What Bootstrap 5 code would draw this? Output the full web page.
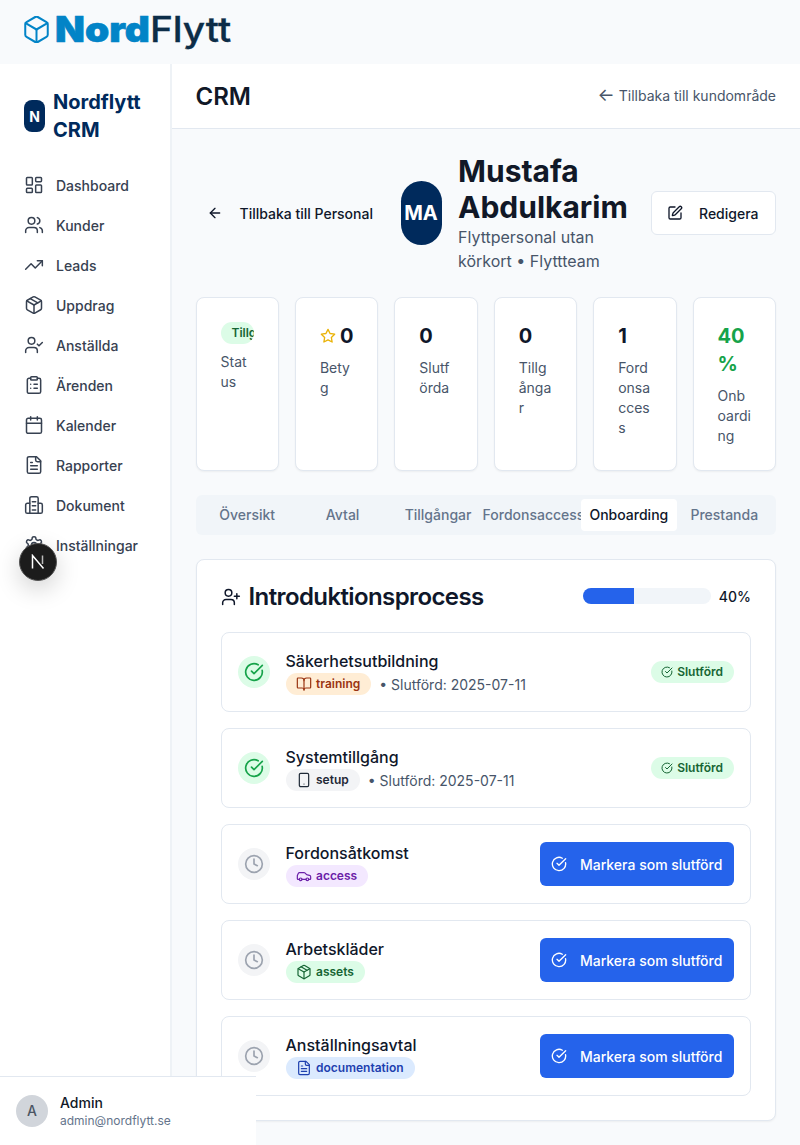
<!DOCTYPE html>
<html lang="sv">
<head>
    <meta charset="UTF-8">
    <title>Nordflytt CRM</title>
    <link href="https://cdn.jsdelivr.net/npm/bootstrap@5.3.0/dist/css/bootstrap.min.css" rel="stylesheet">
    <style>
        body {
            font-family: Inter, "Liberation Sans", sans-serif;
            background: #f8fafc;
            color: #0f172a;
            height: 100vh;
            overflow: hidden;
            position: relative;
        }

        .ico {
            width: 16px;
            height: 16px;
            fill: none;
            stroke: currentColor;
            stroke-width: 2;
            stroke-linecap: round;
            stroke-linejoin: round;
            flex-shrink: 0;
        }

        .top-logo { height: 64px; padding-left: 24px; background: #f8fafc; }
        .logo-cube { width: 25px; height: 27px; color: #0284c7; stroke-width: 1.6; margin-top: -5px; }
        .logo-text { font-size: 35px; line-height: 1; margin: 0 0 5px 6px; transform: scaleX(1.11); transform-origin: left center; }
        .logo-nord { color: #0284c7; font-weight: 900; -webkit-text-stroke: .6px #0284c7; }
        .logo-flytt { color: #0c2d48; font-weight: 500; -webkit-text-stroke: .3px #0c2d48; }

        .app-shell { height: calc(100vh - 64px); }

        .side { width: 171.5px; background: #fff; border-right: 2px solid #eef2f6; padding: 24px 0 0 24px; }
        .side-brand { height: 56px; margin-bottom: 21px; gap: 8px; }
        .side-logo { width: 21px; height: 32px; border-radius: 8px; background: #002a5c; color: #fff; font-size: 14px; font-weight: 700; }
        .side-name { font-size: 20px; line-height: 28px; font-weight: 700; color: #002a5c; width: 100px; }
        .side-link { height: 40px; gap: 12px; font-size: 14px; font-weight: 500; color: #374151; text-decoration: none; }
        .side-link .ico { width: 20px; height: 20px; stroke-width: 1.8; }

        .dev-badge {
            position: absolute; left: 19px; top: 543px; width: 38px; height: 38px;
            background: #1c1c1c; border: 1px solid #555; color: #fff;
            box-shadow: 0 8px 24px rgba(0, 0, 0, .18);
        }
        .dev-badge svg { width: 16px; height: 16px; stroke: #fff; stroke-width: 1.5; fill: none; }

        .main-head { height: 65px; background: #fff; border-bottom: 1px solid #e2e8f0; padding: 0 24px; }
        .main-title { font-size: 24px; line-height: 32px; font-weight: 600; color: #111827; padding-top: 1px; }
        .back-shop { font-size: 14px; line-height: 20px; color: #475569; text-decoration: none; padding-bottom: 1px; }
        .back-arrow { font-size: 18px; line-height: 1; }

        .main-body { padding: 24px; }

        .profile-row { height: 120px; }
        .back-link { padding-left: 11px; gap: 17px; font-size: 14px; font-weight: 500; color: #0f172a; text-decoration: none; width: 177px; white-space: nowrap; }
        .profile-avatar { width: 41px; height: 64px; margin-left: 28px; background: #002a5c; color: #fff; font-size: 20px; font-weight: 700; border-radius: 21px; }
        .profile-text { width: 177px; margin-left: 16.5px; }
        .profile-name { font-size: 30px; line-height: 36px; font-weight: 700; color: #111827; margin: 0; }
        .profile-role { font-size: 16px; line-height: 24px; color: #475569; }
        .edit-btn { width: 125px; height: 44px; margin-left: auto; gap: 16px; padding: 0 15px; background: #fff; border: 1px solid #e2e8f0; border-radius: 6px; font-size: 14px; font-weight: 500; color: #0f172a; }

        .stat-grid { display: grid; grid-template-columns: repeat(6, minmax(0, 1fr)); gap: 16px; margin-top: 24px; }
        .stat-box { height: 174px; padding: 24px; border: 1px solid #e2e8f0; border-radius: 8px; background: #fff; box-shadow: 0 1px 2px rgba(0, 0, 0, .05); }
        .stat-num { font-size: 20px; line-height: 28px; font-weight: 700; color: #0f172a; overflow-wrap: anywhere; gap: 4px; }
        .stat-green { color: #16a34a; }
        .stat-label { margin-top: 8px; font-size: 14px; line-height: 20px; color: #475569; overflow-wrap: anywhere; }
        .status-pill { display: block; height: 22px; max-width: 100%; overflow: hidden; padding: 3px 11px; font-size: 12px; line-height: 16px; font-weight: 600; white-space: nowrap; background: #dcfce7; color: #166534; border-radius: 11px; }
        .star-ico { color: #eab308; }

        .tab-strip { display: grid; grid-template-columns: repeat(6, minmax(0, 1fr)); height: 40px; margin-top: 24px; padding: 4px; background: #f1f5f9; border-radius: 6px; }
        .tab-item { display: flex; justify-content: center; align-items: center; min-width: 0; white-space: nowrap; font-size: 14px; font-weight: 500; color: #64748b; text-decoration: none; border-radius: 4px; padding-bottom: 1px; }
        .tab-on { position: relative; background: #fff; color: #0f172a; }

        .panel-box { margin-top: 24px; padding: 20px 24px 24px; border: 1px solid #e2e8f0; border-radius: 8px; background: #fff; box-shadow: 0 1px 2px rgba(0, 0, 0, .05); }
        .panel-head { height: 32px; margin-bottom: 20px; }
        .panel-title { font-size: 24px; line-height: 32px; font-weight: 600; margin: 0; gap: 8px; letter-spacing: -.6px; padding-top: 1px; }
        .panel-title .ico { width: 20px; height: 20px; stroke-width: 1.8; }
        .bar-track { width: 128px; height: 16px; background: #f1f5f9; border-radius: 8px; }
        .bar-fill { background: #2563eb; }
        .bar-text { font-size: 14px; font-weight: 500; }

        .step-row { height: 80px; padding: 0 16px; border: 1px solid #e2e8f0; border-radius: 8px; }
        .step-list { gap: 16px; }
        .step-dot { width: 32px; height: 32px; margin-right: 16px; }
        .step-dot .ico { width: 20px; height: 20px; }
        .dot-done { background: #dcfce7; color: #16a34a; }
        .dot-wait { background: #f3f4f6; color: #9ca3af; }
        .step-title { font-size: 16px; line-height: 24px; font-weight: 500; color: #0f172a; }
        .step-meta { gap: 8px; height: 22px; font-size: 14px; color: #475569; }

        .tag-pill { height: 22px; padding: 0 11px 0 10.5px; gap: 4px; font-size: 12px; font-weight: 600; border-radius: 11px; }
        .tag-pill .ico { width: 16px; height: 16px; stroke-width: 1.8; }
        .tag-training { background: #ffedd5; color: #9a3412; }
        .tag-setup { background: #f3f4f6; color: #1f2937; }
        .tag-access { background: #f3e8ff; color: #6b21a8; }
        .tag-assets { background: #dcfce7; color: #166534; }
        .tag-doc { background: #dbeafe; color: #1e40af; }
        .tag-done { background: #dcfce7; color: #166534; }
        .tag-done .ico { width: 12px; height: 12px; stroke-width: 2; }

        .finish-btn { width: 194px; height: 44px; padding: 0 0 0 11px; gap: 13px; background: #2563eb; border: 0; border-radius: 6px; color: #fff; font-size: 14px; font-weight: 500; }

        .user-foot { position: absolute; left: 0; bottom: 0; width: 256px; height: 69px; padding: 0 16px 1px; gap: 12px; background: #fff; border-top: 1px solid #e2e8f0; }
        .user-avatar { width: 32px; height: 32px; background: #d1d5db; color: #4b5563; font-size: 14px; font-weight: 500; }
        .user-name { font-size: 14px; line-height: 20px; font-weight: 500; color: #111827; }
        .user-mail { font-size: 12px; line-height: 16px; color: #64748b; }
    </style>
</head>
<body>

<svg width="0" height="0" class="position-absolute">
    <defs>
        <symbol id="i-dash" viewBox="0 0 24 24"><rect x="3" y="3" width="7" height="9" rx="1"/><rect x="14" y="3" width="7" height="5" rx="1"/><rect x="14" y="12" width="7" height="9" rx="1"/><rect x="3" y="16" width="7" height="5" rx="1"/></symbol>
        <symbol id="i-users" viewBox="0 0 24 24"><path d="M16 21v-2a4 4 0 0 0-4-4H6a4 4 0 0 0-4 4v2"/><circle cx="9" cy="7" r="4"/><path d="M22 21v-2a4 4 0 0 0-3-3.87"/><path d="M16 3.13a4 4 0 0 1 0 7.75"/></symbol>
        <symbol id="i-trend" viewBox="0 0 24 24"><polyline points="22 7 13.5 15.5 8.5 10.5 2 17"/><polyline points="16 7 22 7 22 13"/></symbol>
        <symbol id="i-package" viewBox="0 0 24 24"><path d="M11 21.73a2 2 0 0 0 2 0l7-4A2 2 0 0 0 21 16V8a2 2 0 0 0-1-1.73l-7-4a2 2 0 0 0-2 0l-7 4A2 2 0 0 0 3 8v8a2 2 0 0 0 1 1.73z"/><path d="M12 22V12"/><polyline points="3.29 7 12 12 20.71 7"/><path d="m7.5 4.27 9 5.15"/></symbol>
        <symbol id="i-usercheck" viewBox="0 0 24 24"><path d="M16 21v-2a4 4 0 0 0-4-4H6a4 4 0 0 0-4 4v2"/><circle cx="9" cy="7" r="4"/><polyline points="16 11 18 13 22 9"/></symbol>
        <symbol id="i-clip" viewBox="0 0 24 24"><rect x="8" y="2" width="8" height="4" rx="1"/><path d="M16 4h2a2 2 0 0 1 2 2v14a2 2 0 0 1-2 2H6a2 2 0 0 1-2-2V6a2 2 0 0 1 2-2h2"/><path d="M12 11h4"/><path d="M12 16h4"/><path d="M8 11h.01"/><path d="M8 16h.01"/></symbol>
        <symbol id="i-cal" viewBox="0 0 24 24"><path d="M8 2v4"/><path d="M16 2v4"/><rect x="3" y="4" width="18" height="18" rx="2"/><path d="M3 10h18"/></symbol>
        <symbol id="i-file" viewBox="0 0 24 24"><path d="M15 2H6a2 2 0 0 0-2 2v16a2 2 0 0 0 2 2h12a2 2 0 0 0 2-2V7Z"/><path d="M14 2v4a2 2 0 0 0 2 2h4"/><path d="M10 9H8"/><path d="M16 13H8"/><path d="M16 17H8"/></symbol>
        <symbol id="i-docs" viewBox="0 0 24 24"><path d="M7 22V4a2 2 0 0 1 2-2h6a2 2 0 0 1 2 2v18"/><path d="M7 10H4a2 2 0 0 0-2 2v8a2 2 0 0 0 2 2h16a2 2 0 0 0 2-2v-8a2 2 0 0 0-2-2h-3"/><path d="M10 8h4"/><path d="M10 13h4"/><path d="M10 18h4"/></symbol>
        <symbol id="i-gear" viewBox="0 0 24 24"><path d="M12.22 2h-.44a2 2 0 0 0-2 2v.18a2 2 0 0 1-1 1.73l-.43.25a2 2 0 0 1-2 0l-.15-.08a2 2 0 0 0-2.73.73l-.22.38a2 2 0 0 0 .73 2.73l.15.1a2 2 0 0 1 1 1.72v.51a2 2 0 0 1-1 1.74l-.15.09a2 2 0 0 0-.73 2.73l.22.38a2 2 0 0 0 2.73.73l.15-.08a2 2 0 0 1 2 0l.43.25a2 2 0 0 1 1 1.73V20a2 2 0 0 0 2 2h.44a2 2 0 0 0 2-2v-.18a2 2 0 0 1 1-1.73l.43-.25a2 2 0 0 1 2 0l.15.08a2 2 0 0 0 2.73-.73l.22-.39a2 2 0 0 0-.73-2.73l-.15-.08a2 2 0 0 1-1-1.74v-.5a2 2 0 0 1 1-1.74l.15-.09a2 2 0 0 0 .73-2.73l-.22-.38a2 2 0 0 0-2.73-.73l-.15.08a2 2 0 0 1-2 0l-.43-.25a2 2 0 0 1-1-1.73V4a2 2 0 0 0-2-2z"/><circle cx="12" cy="12" r="3"/></symbol>
        <symbol id="i-check" viewBox="0 0 24 24"><path d="M21.801 10A10 10 0 1 1 17 3.335"/><path d="m9 11 3 3L22 4"/></symbol>
        <symbol id="i-clock" viewBox="0 0 24 24"><circle cx="12" cy="12" r="10"/><polyline points="12 6 12 12 16 14"/></symbol>
        <symbol id="i-book" viewBox="0 0 24 24"><path d="M12 7v14"/><path d="M3 18a1 1 0 0 1-1-1V4a1 1 0 0 1 1-1h5a4 4 0 0 1 4 4 4 4 0 0 1 4-4h5a1 1 0 0 1 1 1v13a1 1 0 0 1-1 1h-6a3 3 0 0 0-3 3 3 3 0 0 0-3-3z"/></symbol>
        <symbol id="i-phone" viewBox="0 0 24 24"><rect x="5" y="2" width="14" height="20" rx="2"/><path d="M12 18h.01"/></symbol>
        <symbol id="i-car" viewBox="0 0 24 24"><path d="M19 17h2c.6 0 1-.4 1-1v-3c0-.9-.7-1.7-1.5-1.9C18.7 10.6 16 10 16 10s-1.3-1.4-2.2-2.3c-.5-.4-1.1-.7-1.8-.7H5c-.6 0-1.1.4-1.4.9l-1.4 2.9A3.7 3.7 0 0 0 2 12v4c0 .6.4 1 1 1h2"/><circle cx="7" cy="17" r="2"/><path d="M9 17h6"/><circle cx="17" cy="17" r="2"/></symbol>
        <symbol id="i-userplus" viewBox="0 0 24 24"><path d="M16 21v-2a4 4 0 0 0-4-4H6a4 4 0 0 0-4 4v2"/><circle cx="9" cy="7" r="4"/><line x1="19" y1="8" x2="19" y2="14"/><line x1="22" y1="11" x2="16" y2="11"/></symbol>
        <symbol id="i-star" viewBox="0 0 24 24"><polygon points="12 2 15.09 8.26 22 9.27 17 14.14 18.18 21.02 12 17.77 5.82 21.02 7 14.14 2 9.27 8.91 8.26"/></symbol>
        <symbol id="i-pen" viewBox="0 0 24 24"><path d="M12 3H5a2 2 0 0 0-2 2v14a2 2 0 0 0 2 2h14a2 2 0 0 0 2-2v-7"/><path d="M18.375 2.625a1 1 0 0 1 3 3l-9.013 9.014a2 2 0 0 1-.853.505l-2.873.84a.5.5 0 0 1-.62-.62l.84-2.873a2 2 0 0 1 .506-.852z"/></symbol>
        <symbol id="i-left" viewBox="0 0 24 24"><path d="m12 19-7-7 7-7"/><path d="M19 12H5"/></symbol>
    </defs>
</svg>

<!-- Logo -->
<header class="top-logo d-flex align-items-center">
    <svg class="ico logo-cube" viewBox="2 1.5 20 21" preserveAspectRatio="none"><path d="M11 21.73a2 2 0 0 0 2 0l7-4A2 2 0 0 0 21 16V8a2 2 0 0 0-1-1.73l-7-4a2 2 0 0 0-2 0l-7 4A2 2 0 0 0 3 8v8a2 2 0 0 0 1 1.73z"/><path d="M12 22V12"/><polyline points="3.29 7 12 12 20.71 7"/></svg>
    <div class="logo-text"><span class="logo-nord">Nord</span><span class="logo-flytt">Flytt</span></div>
</header>

<div class="app-shell d-flex">
    <!-- Sidebar -->
    <aside class="side flex-shrink-0">
        <div class="side-brand d-flex align-items-center">
            <div class="side-logo d-flex align-items-center justify-content-center flex-shrink-0">N</div>
            <div class="side-name">Nordflytt CRM</div>
        </div>
        <nav class="d-flex flex-column">
            <a class="side-link d-flex align-items-center" href="#"><svg class="ico"><use href="#i-dash"/></svg>Dashboard</a>
            <a class="side-link d-flex align-items-center" href="#"><svg class="ico"><use href="#i-users"/></svg>Kunder</a>
            <a class="side-link d-flex align-items-center" href="#"><svg class="ico"><use href="#i-trend"/></svg>Leads</a>
            <a class="side-link d-flex align-items-center" href="#"><svg class="ico"><use href="#i-package"/></svg>Uppdrag</a>
            <a class="side-link d-flex align-items-center" href="#"><svg class="ico"><use href="#i-usercheck"/></svg>Anställda</a>
            <a class="side-link d-flex align-items-center" href="#"><svg class="ico"><use href="#i-clip"/></svg>Ärenden</a>
            <a class="side-link d-flex align-items-center" href="#"><svg class="ico"><use href="#i-cal"/></svg>Kalender</a>
            <a class="side-link d-flex align-items-center" href="#"><svg class="ico"><use href="#i-file"/></svg>Rapporter</a>
            <a class="side-link d-flex align-items-center" href="#"><svg class="ico"><use href="#i-docs"/></svg>Dokument</a>
            <a class="side-link d-flex align-items-center" href="#"><svg class="ico"><use href="#i-gear"/></svg>Inställningar</a>
        </nav>
    </aside>

    <main class="flex-grow-1">
        <div class="main-head d-flex align-items-center justify-content-between">
            <div class="main-title">CRM</div>
            <a class="back-shop" href="#"><span class="back-arrow">←</span> Tillbaka till kundområde</a>
        </div>

        <div class="main-body">
            <!-- Profile -->
            <div class="profile-row d-flex align-items-center">
                <a class="back-link d-flex align-items-center flex-shrink-0" href="#"><svg class="ico"><use href="#i-left"/></svg>Tillbaka till Personal</a>
                <div class="profile-avatar d-flex align-items-center justify-content-center flex-shrink-0">MA</div>
                <div class="profile-text flex-shrink-0">
                    <h1 class="profile-name">Mustafa Abdulkarim</h1>
                    <div class="profile-role">Flyttpersonal utan körkort • Flyttteam</div>
                </div>
                <button class="edit-btn btn d-flex align-items-center flex-shrink-0"><svg class="ico"><use href="#i-pen"/></svg>Redigera</button>
            </div>

            <!-- Stats -->
            <div class="stat-grid">
                <div class="stat-box">
                    <span class="status-pill">Tillgänglig</span>
                    <div class="stat-label">Status</div>
                </div>
                <div class="stat-box">
                    <div class="stat-num d-flex align-items-center"><svg class="ico star-ico"><use href="#i-star"/></svg>0</div>
                    <div class="stat-label">Betyg</div>
                </div>
                <div class="stat-box">
                    <div class="stat-num">0</div>
                    <div class="stat-label">Slutförda</div>
                </div>
                <div class="stat-box">
                    <div class="stat-num">0</div>
                    <div class="stat-label">Tillgångar</div>
                </div>
                <div class="stat-box">
                    <div class="stat-num">1</div>
                    <div class="stat-label">Fordonsaccess</div>
                </div>
                <div class="stat-box">
                    <div class="stat-num stat-green">40%</div>
                    <div class="stat-label">Onboarding</div>
                </div>
            </div>

            <!-- Tabs -->
            <nav class="tab-strip">
                <a class="tab-item" href="#">Översikt</a>
                <a class="tab-item" href="#">Avtal</a>
                <a class="tab-item" href="#">Tillgångar</a>
                <a class="tab-item" href="#">Fordonsaccess</a>
                <a class="tab-item tab-on" href="#">Onboarding</a>
                <a class="tab-item" href="#">Prestanda</a>
            </nav>

            <!-- Onboarding -->
            <section class="panel-box">
                <div class="panel-head d-flex align-items-center justify-content-between">
                    <h2 class="panel-title d-flex align-items-center"><svg class="ico"><use href="#i-userplus"/></svg>Introduktionsprocess</h2>
                    <div class="d-flex align-items-center gap-2">
                        <div class="progress bar-track"><div class="progress-bar bar-fill" style="width: 40%"></div></div>
                        <span class="bar-text">40%</span>
                    </div>
                </div>

                <div class="step-list d-flex flex-column">
                    <div class="step-row d-flex align-items-center">
                        <div class="step-dot dot-done rounded-circle d-flex align-items-center justify-content-center"><svg class="ico"><use href="#i-check"/></svg></div>
                        <div class="flex-grow-1">
                            <div class="step-title">Säkerhetsutbildning</div>
                            <div class="step-meta d-flex align-items-center">
                                <span class="tag-pill tag-training d-inline-flex align-items-center"><svg class="ico"><use href="#i-book"/></svg>training</span>
                                <span>• Slutförd: 2025-07-11</span>
                            </div>
                        </div>
                        <span class="tag-pill tag-done d-inline-flex align-items-center"><svg class="ico"><use href="#i-check"/></svg>Slutförd</span>
                    </div>

                    <div class="step-row d-flex align-items-center">
                        <div class="step-dot dot-done rounded-circle d-flex align-items-center justify-content-center"><svg class="ico"><use href="#i-check"/></svg></div>
                        <div class="flex-grow-1">
                            <div class="step-title">Systemtillgång</div>
                            <div class="step-meta d-flex align-items-center">
                                <span class="tag-pill tag-setup d-inline-flex align-items-center"><svg class="ico"><use href="#i-phone"/></svg>setup</span>
                                <span>• Slutförd: 2025-07-11</span>
                            </div>
                        </div>
                        <span class="tag-pill tag-done d-inline-flex align-items-center"><svg class="ico"><use href="#i-check"/></svg>Slutförd</span>
                    </div>

                    <div class="step-row d-flex align-items-center">
                        <div class="step-dot dot-wait rounded-circle d-flex align-items-center justify-content-center"><svg class="ico"><use href="#i-clock"/></svg></div>
                        <div class="flex-grow-1">
                            <div class="step-title">Fordonsåtkomst</div>
                            <div class="step-meta d-flex align-items-center">
                                <span class="tag-pill tag-access d-inline-flex align-items-center"><svg class="ico"><use href="#i-car"/></svg>access</span>
                            </div>
                        </div>
                        <button class="finish-btn btn d-flex align-items-center"><svg class="ico"><use href="#i-check"/></svg>Markera som slutförd</button>
                    </div>

                    <div class="step-row d-flex align-items-center">
                        <div class="step-dot dot-wait rounded-circle d-flex align-items-center justify-content-center"><svg class="ico"><use href="#i-clock"/></svg></div>
                        <div class="flex-grow-1">
                            <div class="step-title">Arbetskläder</div>
                            <div class="step-meta d-flex align-items-center">
                                <span class="tag-pill tag-assets d-inline-flex align-items-center"><svg class="ico"><use href="#i-package"/></svg>assets</span>
                            </div>
                        </div>
                        <button class="finish-btn btn d-flex align-items-center"><svg class="ico"><use href="#i-check"/></svg>Markera som slutförd</button>
                    </div>

                    <div class="step-row d-flex align-items-center">
                        <div class="step-dot dot-wait rounded-circle d-flex align-items-center justify-content-center"><svg class="ico"><use href="#i-clock"/></svg></div>
                        <div class="flex-grow-1">
                            <div class="step-title">Anställningsavtal</div>
                            <div class="step-meta d-flex align-items-center">
                                <span class="tag-pill tag-doc d-inline-flex align-items-center"><svg class="ico"><use href="#i-file"/></svg>documentation</span>
                            </div>
                        </div>
                        <button class="finish-btn btn d-flex align-items-center"><svg class="ico"><use href="#i-check"/></svg>Markera som slutförd</button>
                    </div>
                </div>
            </section>
        </div>
    </main>
</div>

<!-- User -->
<div class="user-foot d-flex align-items-center">
    <div class="user-avatar rounded-circle d-flex align-items-center justify-content-center flex-shrink-0">A</div>
    <div>
        <div class="user-name">Admin</div>
        <div class="user-mail">admin@nordflytt.se</div>
    </div>
</div>

<!-- Dev badge: Next.js mark -->
<div class="dev-badge rounded-circle d-flex align-items-center justify-content-center">
    <svg viewBox="0 0 16 16"><path d="M2.5 14.5V1.5L13.5 14.5"/><path d="M12.5 1.5V10" opacity=".7"/></svg>
</div>

<script src="https://cdn.jsdelivr.net/npm/bootstrap@5.3.0/dist/js/bootstrap.bundle.min.js"></script>
</body>
</html>
